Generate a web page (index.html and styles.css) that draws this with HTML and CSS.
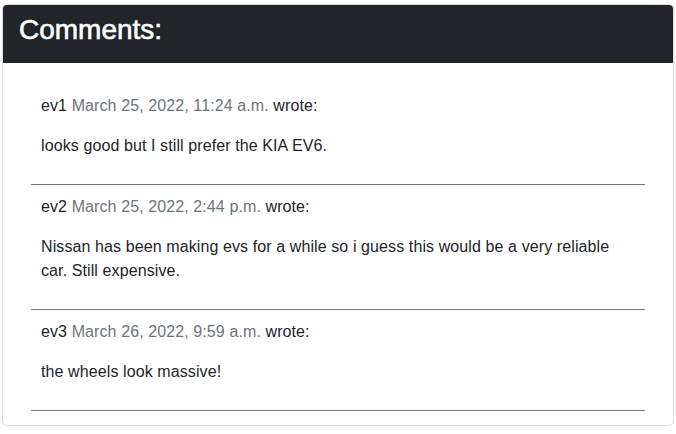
FILE: index.html
```html
<!DOCTYPE html>
<html lang="en">
<head>
<meta charset="utf-8">
<title>Comments</title>
<link rel="stylesheet" href="styles.css">
</head>
<body>
<div class="card">
  <div class="card-header">
    <h3 class="card-title">Comments:</h3>
  </div>
  <div class="card-body">
    <div class="comment">
      <p class="meta">ev1 <span class="date">March 25, 2022, 11:24 a.m.</span> wrote:</p>
      <p class="text">looks good but I still prefer the KIA EV6.</p>
    </div>
    <div class="comment">
      <p class="meta">ev2 <span class="date">March 25, 2022, 2:44 p.m.</span> wrote:</p>
      <p class="text">Nissan has been making evs for a while so i guess this would be a very reliable car. Still expensive.</p>
    </div>
    <div class="comment">
      <p class="meta">ev3 <span class="date">March 26, 2022, 9:59 a.m.</span> wrote:</p>
      <p class="text">the wheels look massive!</p>
    </div>
  </div>
</div>
</body>
</html>
```

FILE: styles.css
```css
* { box-sizing: border-box; }
html, body { margin: 0; padding: 0; background: #fff; }
body {
  padding: 4px 2px 0 2px;
  font-family: "Liberation Sans", Arial, sans-serif;
  font-size: 16px;
  line-height: 24px;
  color: #212529;
}
.card {
  width: 672px;
  height: 422px;
  border: 1px solid #dcdcdc;
  border-radius: 5px;
  overflow: hidden;
  display: flex;
  flex-direction: column;
}
.card-header {
  background: #212529;
  color: #fff;
  padding: 8px 16px 16px 16px;
  height: 59px;
}
.card-title {
  margin: 0;
  font-size: 28px;
  line-height: 34px;
  font-weight: 400;
  -webkit-text-stroke: 0.6px #fff;
}
.card-body {
  padding: 21px 28px 14px 28px;
}
.comment {
  padding: 10px 10px;
  border-bottom: 1px solid #777;
  letter-spacing: 0.1px;
}
.comment p { margin: 0 0 16px 0; }
.date { color: #6c757d; }
```
